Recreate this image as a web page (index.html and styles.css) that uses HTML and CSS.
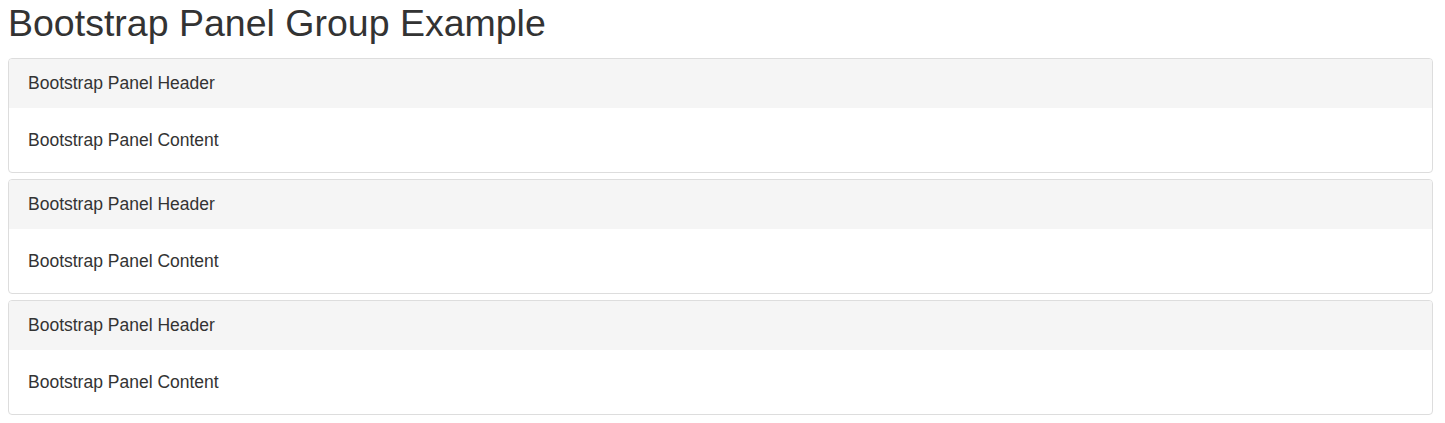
FILE: index.html
```html
<!DOCTYPE html>
<html lang="en">
<head>
    <meta charset="UTF-8">
    <meta name="viewport" content="width=device-width, initial-scale=1.0">
    <title>Bootstrap Panel Group Example</title>
    <link rel="stylesheet" href="styles.css">
</head>
<body>
    <div class="container">
        <h1>Bootstrap Panel Group Example</h1>

        <div class="panel-group">
            <div class="panel">
                <div class="panel-heading">Bootstrap Panel Header</div>
                <div class="panel-body">Bootstrap Panel Content</div>
            </div>
            <div class="panel">
                <div class="panel-heading">Bootstrap Panel Header</div>
                <div class="panel-body">Bootstrap Panel Content</div>
            </div>
            <div class="panel">
                <div class="panel-heading">Bootstrap Panel Header</div>
                <div class="panel-body">Bootstrap Panel Content</div>
            </div>
        </div>
    </div>
</body>
</html>
```

FILE: styles.css
```css
body {
    margin: 0;
    font-family: "Liberation Sans", Arial, Helvetica, sans-serif;
    color: #333;
    background-color: #fff;
}
.container {
    padding: 3px 12px 0 8px;
}
h1 {
    margin: 0 0 15px;
    font-size: 37.5px;
    font-weight: normal;
    line-height: 40px;
}
.panel-group {
    display: flex;
    flex-direction: column;
    gap: 6px;
}
.panel {
    border: 1px solid #ddd;
    border-radius: 4px;
    overflow: hidden;
    font-size: 17.5px;
    line-height: 21px;
}
.panel-heading {
    padding: 14px 19px;
    background-color: #f5f5f5;
}
.panel-body {
    padding: 22px 19px 21px;
}
```
